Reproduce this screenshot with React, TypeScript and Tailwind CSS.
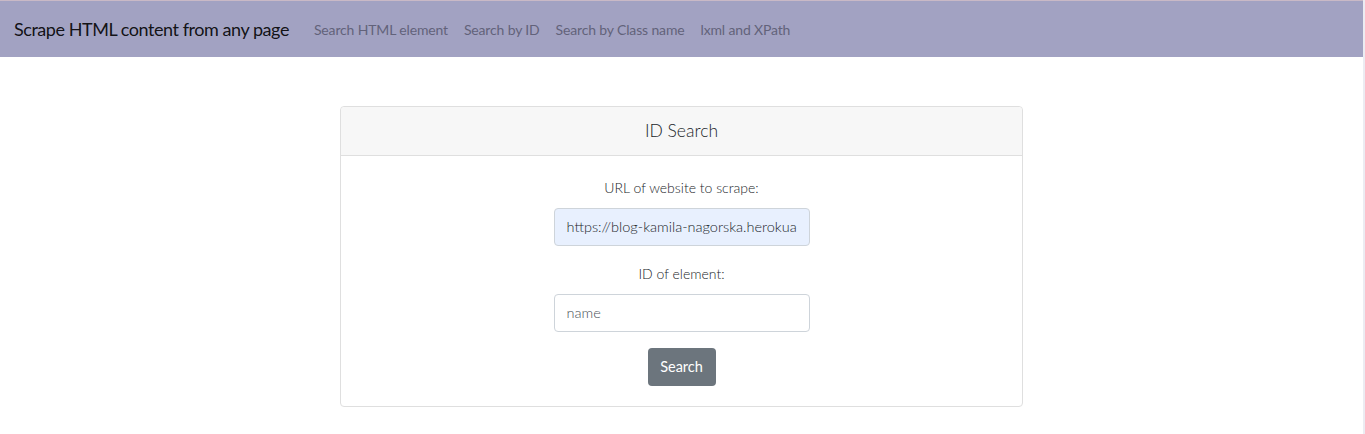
import React from "react";

const font = { fontFamily: "Lato, 'Noto Sans', sans-serif" };

export default function App() {
  return (
    <div className="w-[1365px] min-h-[434px] bg-white flex" style={font}>
      <div className="w-[1363px] flex flex-col">
        <div className="h-px bg-[#c9b9c6]" />
        <nav className="h-14 bg-[#a2a2c2] flex items-center px-[14px]">
          <span className="text-[18px] tracking-[-0.45px] leading-[30px] text-[rgba(0,0,0,0.9)] font-normal mr-[25px]">
            Scrape HTML content from any page
          </span>
          <div className="flex gap-4 text-[14px] tracking-[-0.15px] text-[#62627a] font-normal">
            <span>Search HTML element</span>
            <span>Search by ID</span>
            <span>Search by Class name</span>
            <span>lxml and XPath</span>
          </div>
        </nav>
        <div className="flex justify-center pt-[49px]">
          <div className="w-[683px] border border-[#dfdfdf] rounded-[4px] bg-white">
            <div className="h-[49px] bg-[#f7f7f7] border-b border-[#dfdfdf] flex items-center justify-center text-[17.5px] font-light text-[#212529] rounded-t-[4px]">
              ID Search
            </div>
            <div className="flex flex-col items-center pt-5 pb-5 text-[#212529] font-light">
              <label className="text-[14px] leading-6 mb-2">URL of website to scrape:</label>
              <div className="w-[256px] h-[38px] bg-[#e8f0fe] border border-[#ced4da] rounded-[4px] px-3 flex items-center text-[14.5px] overflow-hidden whitespace-nowrap mb-4">
                https://blog-kamila-nagorska.herokua
              </div>
              <label className="text-[14px] leading-6 mb-2">ID of element:</label>
              <div className="w-[256px] h-[38px] bg-white border border-[#ced4da] rounded-[4px] px-3 flex items-center text-[14.5px] text-[#495057] mb-4">
                name
              </div>
              <button className="w-[68px] h-[38px] bg-[#6c757d] rounded-[4px] text-white text-[14.5px] font-normal">
                Search
              </button>
            </div>
          </div>
        </div>
      </div>
      <div className="w-[2px] bg-[#ececf2]" />
    </div>
  );
}
